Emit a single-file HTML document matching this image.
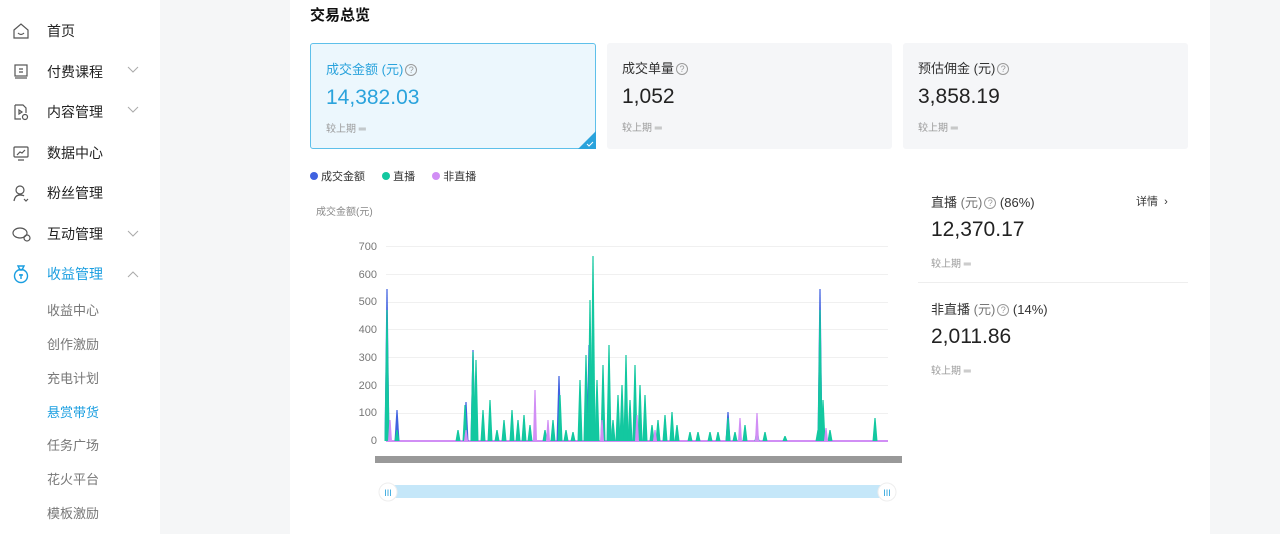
<!DOCTYPE html>
<html><head><meta charset="utf-8"><style>
*{margin:0;padding:0;box-sizing:border-box}
body{width:1280px;height:534px;overflow:hidden;background:#f5f6f7;font-family:"Liberation Sans","Noto Sans CJK SC",sans-serif;color:#222;position:relative}
.side{position:absolute;left:0;top:0;width:160px;height:534px;background:#fff}
.it{position:absolute;left:47px;font-size:14px;color:#222;line-height:16px}
.ic{position:absolute;left:12px}
.chev{position:absolute;left:127px}
.sub{position:absolute;left:47px;font-size:13px;color:#777;line-height:16px}
.main{position:absolute;left:290px;top:0;width:920px;height:534px;background:#fff}
.abs{position:absolute}
.card{position:absolute;top:43px;height:106px;background:#f5f6f8;border-radius:3px}
.ct{position:absolute;left:15px;top:15px;font-size:13px;color:#333}
.cv{position:absolute;left:15px;top:42px;font-size:21px;color:#222}
.cc{position:absolute;left:15px;top:76px;font-size:10px;color:#999}
.q{display:inline-block;width:12px;height:12px;border:1px solid #999;border-radius:50%;font-size:9px;line-height:10px;text-align:center;color:#999;vertical-align:1px;margin-left:2px}
</style></head><body>
<div class="side">
<svg class="ic" style="top:22px" width="18" height="18" viewBox="0 0 18 18" fill="none" stroke="#555" stroke-width="1.2"><path d="M2 8 L9 2 L16 8 V16 H2Z"/><path d="M6 11 Q9 14 12 11"/></svg>
<div class="it" style="top:23px">首页</div>
<svg class="ic" style="top:63px" width="18" height="18" viewBox="0 0 18 18" fill="none" stroke="#555" stroke-width="1.2"><rect x="3" y="2" width="12" height="11"/><path d="M3 15 H15"/><path d="M7 6 H11 M7 9 H11"/></svg>
<div class="it" style="top:64px">付费课程</div>
<svg class="chev" style="top:66px" width="12" height="8"><path d="M1 1 L6 6 L11 1" fill="none" stroke="#aaa"/></svg>
<svg class="ic" style="top:103px" width="18" height="18" viewBox="0 0 18 18" fill="none" stroke="#555" stroke-width="1.2"><path d="M3 2 H11 L14 5 V10 M3 2 V16 H9"/><path d="M7 7 L10 9 L7 11Z"/><circle cx="13" cy="14" r="2.5"/></svg>
<div class="it" style="top:104px">内容管理</div>
<svg class="chev" style="top:106px" width="12" height="8"><path d="M1 1 L6 6 L11 1" fill="none" stroke="#aaa"/></svg>
<svg class="ic" style="top:144px" width="18" height="18" viewBox="0 0 18 18" fill="none" stroke="#555" stroke-width="1.2"><rect x="2" y="3" width="14" height="10" rx="1"/><path d="M5 11 L8 8 L10 9 L13 6 M6 16 H12"/></svg>
<div class="it" style="top:145px">数据中心</div>
<svg class="ic" style="top:184px" width="18" height="18" viewBox="0 0 18 18" fill="none" stroke="#555" stroke-width="1.2"><circle cx="8" cy="6" r="4"/><path d="M2 17 Q3 11 8 11 Q11 11 12 12"/><path d="M12 15 L14 17 L16 15"/></svg>
<div class="it" style="top:185px">粉丝管理</div>
<svg class="ic" style="top:225px" width="20" height="18" viewBox="0 0 20 18" fill="none" stroke="#555" stroke-width="1.2"><ellipse cx="8" cy="8" rx="7" ry="5"/><circle cx="15" cy="13" r="3"/></svg>
<div class="it" style="top:226px">互动管理</div>
<svg class="chev" style="top:230px" width="12" height="8"><path d="M1 1 L6 6 L11 1" fill="none" stroke="#aaa"/></svg>
<svg class="ic" style="top:264px" width="18" height="20" viewBox="0 0 18 20" fill="none" stroke="#1a9ee0" stroke-width="1.4"><path d="M6 2 H12 L10 6 H8Z"/><circle cx="9" cy="12" r="6.5"/><path d="M7 11 H11 M9 10 V15"/></svg>
<div class="it" style="top:266px;color:#1a9ee0">收益管理</div>
<svg class="chev" style="top:270px" width="12" height="8"><path d="M1 7 L6 2 L11 7" fill="none" stroke="#aaa"/></svg>
<div class="sub" style="top:303px">收益中心</div>
<div class="sub" style="top:337px">创作激励</div>
<div class="sub" style="top:371px">充电计划</div>
<div class="sub" style="top:405px;color:#1a9ee0">悬赏带货</div>
<div class="sub" style="top:438px">任务广场</div>
<div class="sub" style="top:472px">花火平台</div>
<div class="sub" style="top:506px">模板激励</div>
</div>
<div class="main">
<div class="abs" style="left:20px;top:4px;font-size:15px;font-weight:bold;color:#111">交易总览</div>
<div class="card" style="left:20px;width:286px;background:#ecf7fd;border:1px solid #5ec0ea">
<div class="ct" style="color:#2aa3dc">成交金额 (元)<span class="q">?</span></div>
<div class="cv" style="color:#2aa3dc">14,382.03</div>
<div class="cc">较上期 ═</div>
<svg class="abs" style="right:-1px;bottom:-1px" width="18" height="18"><path d="M18 0 V18 H0Z" fill="#2aa3dc"/><path d="M9 13 L11 15 L15 11" stroke="#fff" fill="none"/></svg>
</div>
<div class="card" style="left:317px;width:285px"><div class="ct">成交单量<span class="q">?</span></div><div class="cv">1,052</div><div class="cc">较上期 ═</div></div>
<div class="card" style="left:613px;width:285px"><div class="ct">预估佣金 (元)<span class="q">?</span></div><div class="cv">3,858.19</div><div class="cc">较上期 ═</div></div>
<div class="abs" style="left:20px;top:168px;font-size:11px;color:#333;white-space:nowrap">
<span style="display:inline-block;width:8px;height:8px;border-radius:50%;background:#4062e0"></span> 成交金额
<span style="display:inline-block;width:8px;height:8px;border-radius:50%;background:#13c8a0;margin-left:14px"></span> 直播
<span style="display:inline-block;width:8px;height:8px;border-radius:50%;background:#d18ef5;margin-left:14px"></span> 非直播</div>
<div class="abs" style="left:26px;top:203px;font-size:10px;color:#888">成交金额(元)</div>
<div class="abs" style="left:641px;top:192px;font-size:13px;color:#333">直播 <span style="color:#777">(元)</span><span class="q">?</span> (86%)</div>
<div class="abs" style="left:846px;top:193px;font-size:11px;color:#333">详情 &nbsp;›</div>
<div class="abs" style="left:641px;top:218px;font-size:21px">12,370.17</div>
<div class="abs" style="left:641px;top:255px;font-size:10px;color:#999">较上期 ═</div>
<div class="abs" style="left:628px;top:282px;width:270px;height:1px;background:#eee"></div>
<div class="abs" style="left:641px;top:299px;font-size:13px;color:#333">非直播 <span style="color:#777">(元)</span><span class="q">?</span> (14%)</div>
<div class="abs" style="left:641px;top:325px;font-size:21px">2,011.86</div>
<div class="abs" style="left:641px;top:362px;font-size:10px;color:#999">较上期 ═</div>
</div>
<svg class="abs" style="left:0;top:0" width="1280" height="534">
<g font-size="11" fill="#777" text-anchor="end" font-family="Liberation Sans">
<text x="377" y="250">700</text><text x="377" y="278">600</text><text x="377" y="305">500</text><text x="377" y="333">400</text><text x="377" y="361">300</text><text x="377" y="389">200</text><text x="377" y="416">100</text><text x="377" y="444">0</text></g>
<g stroke="#f0f0f0"><path d="M386 246.5H888M386 274.5H888M386 302.5H888M386 329.5H888M386 357.5H888M386 385.5H888M386 413.5H888"/></g>
<path d="M386 441H888" stroke="#d18ef5" stroke-width="2"/>
<g fill="#4062e0" id="b"></g><g fill="#13c8a0" id="g"></g><g fill="#d18ef5" id="p"></g>
<rect x="375" y="456" width="527" height="7" fill="#999"/>
<text x="894" y="463" font-size="10" fill="#999" text-anchor="end">28</text>
<rect x="388" y="485" width="500" height="13" rx="3" fill="#c5e7f9"/>
<circle cx="388" cy="492" r="9" fill="#fff" stroke="#eee"/><text x="388" y="496" font-size="9" fill="#2aa3dc" text-anchor="middle">III</text>
<circle cx="887" cy="492" r="9" fill="#fff" stroke="#eee"/><text x="887" y="496" font-size="9" fill="#2aa3dc" text-anchor="middle">III</text>
</svg>
<script>
function sp(id,arr,w){var g=document.getElementById(id),h='';for(var i=0;i<arr.length;i+=2){var x=arr[i],y=arr[i+1];h+='<path d="M'+(x-w)+' 441L'+(x-0.6)+' '+y+'L'+(x+0.6)+' '+y+'L'+(x+w)+' 441Z"/>';}g.innerHTML=h;}
sp('b',[387,289,397,410,466,402,473,350,559,376,589,345,728,412,820,289],2.5);
sp('g',[387,310,397,430,458,430,465,405,473,352,476,360,483,410,490,400,497,430,504,420,512,410,518,420,524,415,530,425,545,430,553,420,560,395,566,430,573,432,580,380,586,355,590,300,593,256,597,380,603,365,609,345,613,420,618,395,622,385,626,355,630,400,635,365,640,385,645,395,652,425,658,420,665,415,672,412,677,425,690,432,698,432,710,432,718,432,728,418,735,432,745,425,757,430,765,432,785,436,818,430,820,310,823,400,830,430,875,418],2.5);
sp('p',[390,420,466,430,535,390,548,420,602,420,637,415,655,430,740,418,757,413,826,428],2);
</script>
</body></html>
